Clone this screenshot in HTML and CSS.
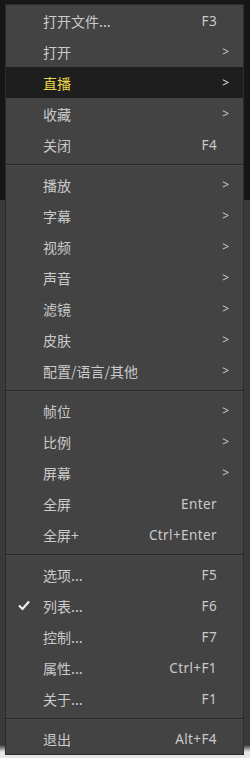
FILE: index.html
```html
<!DOCTYPE html>
<html lang="zh">
<head>
<meta charset="utf-8">
<title>菜单</title>
<link rel="stylesheet" href="styles.css">
</head>
<body>
<div class="menu">
  <div class="item"><span class="label">打开文件...</span><span class="key">F3</span></div>
  <div class="item"><span class="label">打开</span><span class="arrow">&gt;</span></div>
  <div class="item active"><span class="label">直播</span><span class="arrow">&gt;</span></div>
  <div class="item"><span class="label">收藏</span><span class="arrow">&gt;</span></div>
  <div class="item"><span class="label">关闭</span><span class="key">F4</span></div>
  <div class="sep"></div>
  <div class="item"><span class="label">播放</span><span class="arrow">&gt;</span></div>
  <div class="item"><span class="label">字幕</span><span class="arrow">&gt;</span></div>
  <div class="item"><span class="label">视频</span><span class="arrow">&gt;</span></div>
  <div class="item"><span class="label">声音</span><span class="arrow">&gt;</span></div>
  <div class="item"><span class="label">滤镜</span><span class="arrow">&gt;</span></div>
  <div class="item"><span class="label">皮肤</span><span class="arrow">&gt;</span></div>
  <div class="item"><span class="label">配置/语言/其他</span><span class="arrow">&gt;</span></div>
  <div class="sep"></div>
  <div class="item"><span class="label">帧位</span><span class="arrow">&gt;</span></div>
  <div class="item"><span class="label">比例</span><span class="arrow">&gt;</span></div>
  <div class="item"><span class="label">屏幕</span><span class="arrow">&gt;</span></div>
  <div class="item"><span class="label">全屏</span><span class="key">Enter</span></div>
  <div class="item"><span class="label">全屏+</span><span class="key">Ctrl+Enter</span></div>
  <div class="sep"></div>
  <div class="item"><span class="label">选项...</span><span class="key">F5</span></div>
  <div class="item checked"><svg class="check" width="12" height="11" viewBox="0 0 12 11"><path d="M1 5.5 L4.5 9 L11 1.5" fill="none" stroke="#f0f0f0" stroke-width="2.2"/></svg><span class="label">列表...</span><span class="key">F6</span></div>
  <div class="item"><span class="label">控制...</span><span class="key">F7</span></div>
  <div class="item"><span class="label">属性...</span><span class="key">Ctrl+F1</span></div>
  <div class="item"><span class="label">关于...</span><span class="key">F1</span></div>
  <div class="sep"></div>
  <div class="item"><span class="label">退出</span><span class="key">Alt+F4</span></div>
</div>
</body>
</html>
```
FILE: styles.css
```css
html {
  background: linear-gradient(to bottom, #161616 0, #161616 200px, #3a3a3a 200px, #3a3a3a 745px, #e6e6e6 752px);
  min-height: 758px;
}
body {
  margin: 0;
  padding: 4px 6px 4px 5px;
  font-family: "Noto Sans CJK SC", "Noto Sans", sans-serif;
}
.menu {
  width: 237px;
  background: #434343;
  border: 1px solid #2c2c2c;
  display: flex;
  flex-direction: column;
}
.item {
  position: relative;
  height: 31px;
  display: grid;
  grid-template-columns: 1fr auto 12px;
  align-items: center;
  padding: 0 14px 0 37px;
  color: #cacaca;
  font-size: 14px;
}
.label {
  grid-column: 1;
}
.key {
  grid-column: 2;
  font-family: "Noto Sans", sans-serif;
  font-size: 13.5px;
  letter-spacing: 0.4px;
}
.arrow {
  grid-column: 3;
  justify-self: end;
  font-family: "Noto Sans", sans-serif;
  font-size: 12px;
}
.active {
  background: #1e1e1e;
}
.active .label {
  color: #e8d54c;
}
.active .arrow {
  color: #e6e6e6;
}
.check {
  position: absolute;
  left: 12px;
  top: 10px;
}
.sep {
  height: 1px;
  margin: 4px 0 3px;
  background: #272727;
  border-bottom: 1px solid #4a4a4a;
}
```
